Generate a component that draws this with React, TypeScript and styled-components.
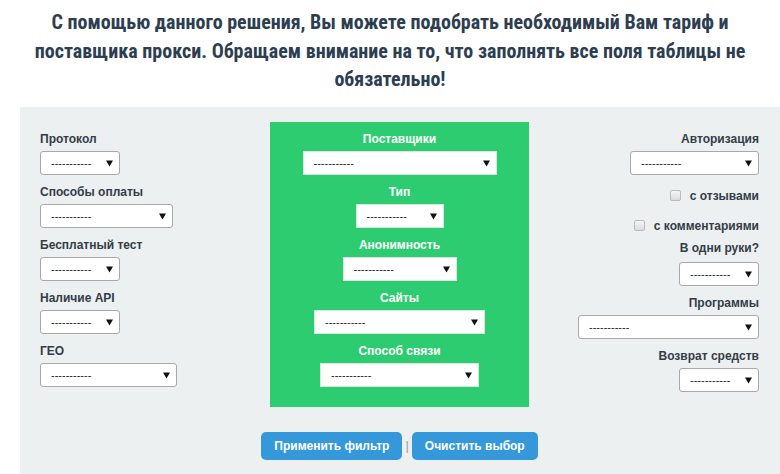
import React from 'react';
import styled, { createGlobalStyle } from 'styled-components';

const GlobalStyle = createGlobalStyle`
  html, body {
    margin: 0;
    padding: 0;
    background: #fff;
  }
  body {
    font-family: 'Liberation Sans', Arial, sans-serif;
    overflow: hidden;
  }
`;

const Page = styled.div`
  width: 780px;
  height: 474px;
  display: flex;
  flex-direction: column;
`;

const Intro = styled.h1`
  margin: 0;
  padding: 8px 0 0;
  font-family: 'Liberation Sans Narrow', 'Roboto Condensed', 'Liberation Sans', sans-serif;
  font-stretch: condensed;
  font-weight: 700;
  font-size: 20px;
  line-height: 28.5px;
  color: #2c3e50;
  text-align: center;
`;

const Panel = styled.section`
  flex: 1;
  margin: 13px 0 0 20px;
  padding: 15px 21px 0 20px;
  background: #ecf0f1;
`;

const Columns = styled.div`
  display: grid;
  grid-template-columns: 230px 259px 230px;
  align-items: start;
`;

const Column = styled.div<{ $align: 'left' | 'center' | 'right' }>`
  display: flex;
  flex-direction: column;
  align-items: ${(p) =>
    p.$align === 'left' ? 'flex-start' : p.$align === 'right' ? 'flex-end' : 'center'};
  padding-top: 9px;
`;

const GreenBox = styled(Column)`
  background: #2ecc71;
  height: 285px;
  box-sizing: border-box;
  padding-bottom: 20px;
`;

const Field = styled.div<{ $top?: number; $gap?: number }>`
  display: flex;
  flex-direction: column;
  align-items: inherit;
  gap: ${(p) => p.$gap ?? 4}px;
  margin-top: ${(p) => p.$top ?? 0}px;
`;

const Label = styled.label<{ $light?: boolean }>`
  font-size: 12px;
  line-height: 16px;
  font-weight: 700;
  color: ${(p) => (p.$light ? '#ffffff' : '#333d47')};
  white-space: nowrap;
`;

const SelectWrap = styled.div<{ $w: number }>`
  position: relative;
  width: ${(p) => p.$w}px;
  height: 24px;
`;

const NativeSelect = styled.select<{ $flat?: boolean }>`
  appearance: none;
  width: 100%;
  height: 100%;
  box-sizing: border-box;
  margin: 0;
  padding: 0 20px 0 10px;
  background: #fff;
  border: 1px solid ${(p) => (p.$flat ? '#d6e9dc' : '#a9a9a9')};
  border-radius: ${(p) => (p.$flat ? 0 : 3)}px;
  font-family: 'Liberation Sans', Arial, sans-serif;
  font-size: 11px;
  color: #222;
  outline: none;
`;

const Arrow = styled.svg`
  position: absolute;
  right: 7px;
  top: 9px;
  pointer-events: none;
`;

const CheckRow = styled.label<{ $top: number }>`
  display: flex;
  align-items: center;
  gap: 9px;
  margin-top: ${(p) => p.$top}px;
  font-size: 12px;
  line-height: 16px;
  font-weight: 700;
  color: #333d47;
  white-space: nowrap;
`;

const Check = styled.input`
  appearance: none;
  margin: 0;
  width: 11px;
  height: 11px;
  box-sizing: border-box;
  border: 1px solid #b9bcbf;
  border-radius: 2px;
  background: linear-gradient(#f6f6f6, #d9dcde);
`;

const Actions = styled.div`
  display: flex;
  justify-content: center;
  align-items: center;
  margin-top: 25px;
`;

const Button = styled.button`
  height: 28px;
  padding: 0 13px;
  border: none;
  border-radius: 5px;
  background: #3498db;
  color: #fff;
  font-family: 'Liberation Sans', Arial, sans-serif;
  font-size: 12px;
  font-weight: 700;
  cursor: pointer;
`;

const Divider = styled.span`
  margin: 0 3px;
  font-size: 13px;
  color: #9aa3a8;
`;

type SelectProps = { width: number; flat?: boolean };

const Select: React.FC<SelectProps> = ({ width, flat }) => (
  <SelectWrap $w={width}>
    <NativeSelect $flat={flat} defaultValue="">
      <option value="">-----------</option>
    </NativeSelect>
    <Arrow width="7" height="7" viewBox="0 0 7 7">
      <path d="M0 0.5 H7 L3.5 6.5 Z" fill="#111" />
    </Arrow>
  </SelectWrap>
);

const left = [
  { label: 'Протокол', w: 80 },
  { label: 'Способы оплаты', w: 133 },
  { label: 'Бесплатный тест', w: 80 },
  { label: 'Наличие API', w: 80 },
  { label: 'ГЕО', w: 137 },
];

const middle = [
  { label: 'Поставщики', w: 194 },
  { label: 'Тип', w: 88 },
  { label: 'Анонимность', w: 114 },
  { label: 'Сайты', w: 171 },
  { label: 'Способ связи', w: 159 },
];

export default function App() {
  return (
    <Page>
      <GlobalStyle />
      <Intro>
        С помощью данного решения, Вы можете подобрать необходимый Вам тариф и
        <br />
        поставщика прокси. Обращаем внимание на то, что заполнять все поля таблицы не
        <br />
        обязательно!
      </Intro>
      <Panel>
        <Columns>
          <Column $align="left">
            {left.map((f, i) => (
              <Field key={f.label} $top={i === 0 ? 0 : 9}>
                <Label>{f.label}</Label>
                <Select width={f.w} />
              </Field>
            ))}
          </Column>

          <GreenBox $align="center">
            {middle.map((f, i) => (
              <Field key={f.label} $top={i === 0 ? 0 : 9}>
                <Label $light>{f.label}</Label>
                <Select width={f.w} flat />
              </Field>
            ))}
          </GreenBox>

          <Column $align="right">
            <Field>
              <Label>Авторизация</Label>
              <Select width={129} />
            </Field>
            <CheckRow $top={13}>
              <Check type="checkbox" />с отзывами
            </CheckRow>
            <CheckRow $top={14}>
              <Check type="checkbox" />с комментариями
            </CheckRow>
            <Field $top={6} $gap={6}>
              <Label>В одни руки?</Label>
              <Select width={80} />
            </Field>
            <Field $top={9}>
              <Label>Программы</Label>
              <Select width={181} />
            </Field>
            <Field $top={9}>
              <Label>Возврат средств</Label>
              <Select width={80} />
            </Field>
          </Column>
        </Columns>
        <Actions>
          <Button type="button">Применить фильтр</Button>
          <Divider>|</Divider>
          <Button type="button">Очистить выбор</Button>
        </Actions>
      </Panel>
    </Page>
  );
}
